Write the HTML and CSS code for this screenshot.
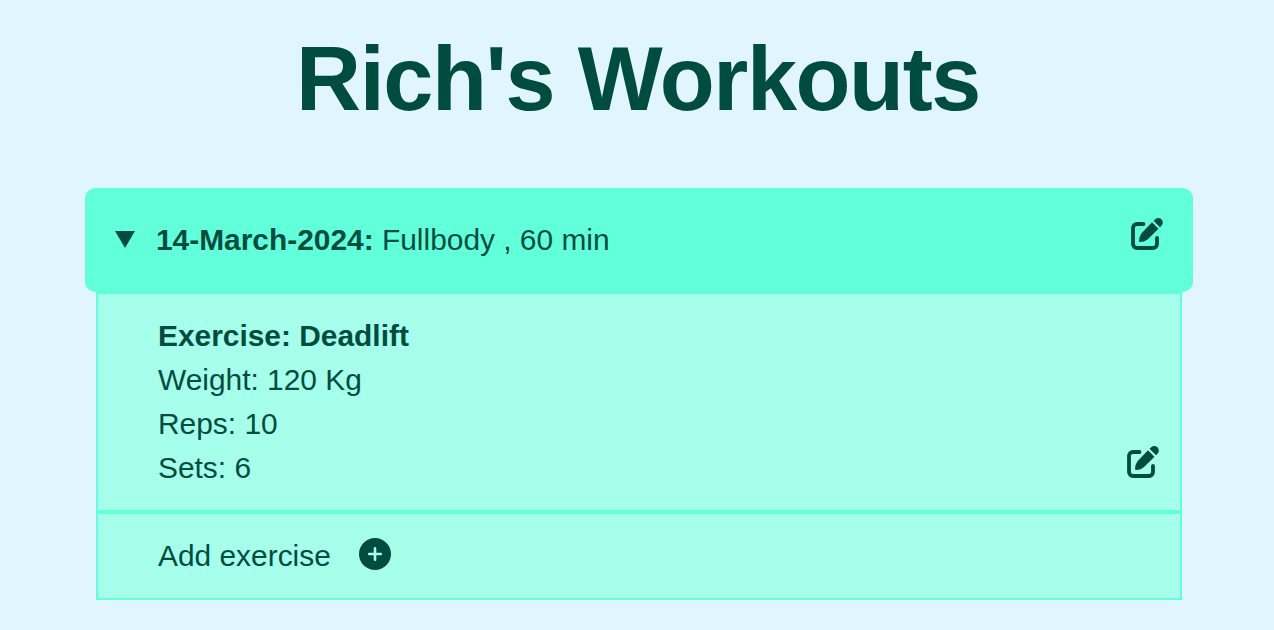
FILE: index.html
```html
<!DOCTYPE html>
<html lang="en">
<head>
<meta charset="utf-8">
<title>Rich's Workouts</title>
<link rel="stylesheet" href="styles.css">
</head>
<body>
<h1 class="title">Rich's Workouts</h1>
<main class="workout">
  <header class="workout-header">
    <svg class="arrow" viewBox="0 0 20 17"><path d="M0 0H20L10 17Z"/></svg>
    <p class="summary"><strong class="date">14-March-2024:</strong> <span class="kind">Fullbody , 60 min</span></p>
    <svg class="edit" viewBox="4 4 32 32"><path class="frame" d="M16.500 10H10A4 4 0 0 0 6 14V30A4 4 0 0 0 10 34H26A4 4 0 0 0 30 30V24"/><path d="M25 8.300L31.500 14.800L20.500 25.500Q17.500 28 13 28Q12 28 12 27Q12 22.500 14.500 19.200ZM26.500 6.800L28 5.400A4.400 4.400 0 0 1 34.500 11.800L33 13.300Z"/></svg>
  </header>
  <section class="details">
    <div class="exercise">
      <div class="facts">
        <p class="name">Exercise: Deadlift</p>
        <p>Weight: 120 Kg</p>
        <p>Reps: 10</p>
        <p>Sets: 6</p>
      </div>
      <svg class="edit" viewBox="4 4 32 32"><path class="frame" d="M16.500 10H10A4 4 0 0 0 6 14V30A4 4 0 0 0 10 34H26A4 4 0 0 0 30 30V24"/><path d="M25 8.300L31.500 14.800L20.500 25.500Q17.500 28 13 28Q12 28 12 27Q12 22.500 14.500 19.200ZM26.500 6.800L28 5.400A4.400 4.400 0 0 1 34.500 11.800L33 13.300Z"/></svg>
    </div>
    <div class="add">
      <span class="add-label">Add exercise</span>
      <svg class="plus" viewBox="0 0 32 32"><circle cx="16" cy="16" r="16"/><path class="cross" d="M16 10.200V21.800M10.200 16H21.800"/></svg>
    </div>
  </section>
</main>
</body>
</html>
```

FILE: styles.css
```css
* { box-sizing: border-box; }
body {
  margin: 0;
  height: 630px;
  overflow: hidden;
  background: #e1f5fe;
  color: #004d40;
  font: 29.9px/44px "Liberation Sans", Arial, sans-serif;
}
p { margin: 0; }
svg { display: block; fill: currentColor; flex: none; }
.title {
  margin: 0;
  padding: 27px 0 0 2px;
  height: 188px;
  text-align: center;
  font-size: 90px;
  letter-spacing: -1.4px;
  line-height: 104px;
}
.workout { width: 1108px; margin-left: 85px; }
.workout-header {
  display: flex;
  align-items: center;
  height: 104px;
  padding: 0 30px;
  border-radius: 10px;
  background: #62ffdb;
}
.arrow { width: 20px; height: 17px; margin: 0 21px 1px 0; }
.summary { flex: 1; white-space: nowrap; }
.edit { width: 32px; height: 32px; }
.frame { fill: none; stroke: currentColor; stroke-width: 3.8; stroke-linecap: round; }
.workout-header .edit { margin-bottom: 12px; }
.details {
  margin: 0 11px;
  height: 308px;
  border: 2px solid #64ffda;
  background: #a6ffeb;
}
.exercise {
  display: flex;
  justify-content: space-between;
  align-items: flex-end;
  height: 220px;
  padding: 0 21px 32px 60px;
  border-bottom: 4px solid #64ffda;
}
.facts { margin-bottom: -12px; }
.name { font-weight: bold; }
.add { display: flex; align-items: flex-start; padding: 20px 60px 0; gap: 28.5px; }
.plus { width: 32px; height: 32px; margin-top: 4px; }
.cross { stroke: #a6ffeb; stroke-width: 2.6; stroke-linecap: round; }
```
